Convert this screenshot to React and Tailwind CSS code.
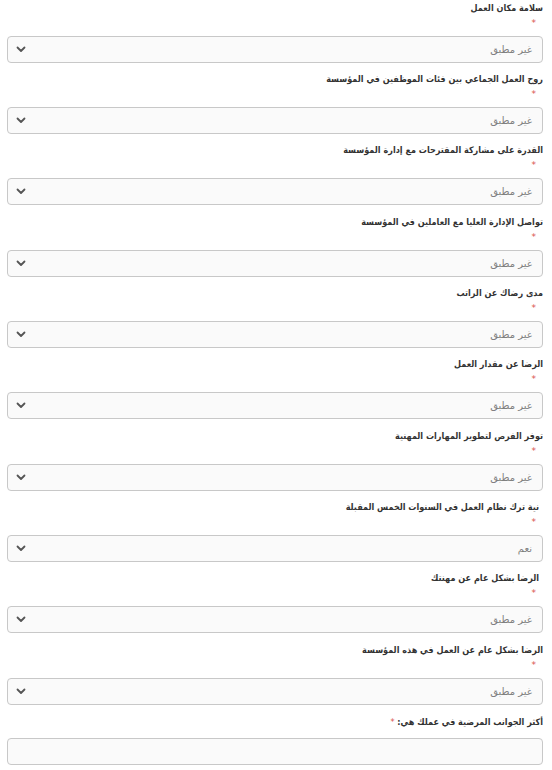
import React from "react";

const items = [
  { label: "سلامة مكان العمل", value: "غير مطبق" },
  { label: "روح العمل الجماعي بين فئات الموظفين في المؤسسة", value: "غير مطبق" },
  { label: "القدرة على مشاركة المقترحات مع إدارة المؤسسة", value: "غير مطبق" },
  { label: "تواصل الإدارة العليا مع العاملين في المؤسسة", value: "غير مطبق" },
  { label: "مدى رضاك عن الراتب", value: "غير مطبق" },
  { label: "الرضا عن مقدار العمل", value: "غير مطبق" },
  { label: "توفر الفرص لتطوير المهارات المهنية", value: "غير مطبق" },
  { label: "نية ترك نظام العمل في السنوات الخمس المقبلة", value: "نعم", indent: true },
  { label: "الرضا بشكل عام عن مهنتك", value: "غير مطبق", indent: true },
  { label: "الرضا بشكل عام عن العمل في هذه المؤسسة", value: "غير مطبق" },
];

function Chevron() {
  return (
    <svg width="10" height="7" viewBox="0 0 10 7" fill="none">
      <path d="M1.5 1.5 L5 5 L8.5 1.5" stroke="#555" strokeWidth="1.8" strokeLinecap="round" strokeLinejoin="round" />
    </svg>
  );
}

const labelFont = { fontFamily: '"DejaVu Sans Condensed", "DejaVu Sans", sans-serif' };

export default function App() {
  return (
    <div
      dir="rtl"
      className="w-[552px] h-[770px] bg-white pl-[7px] pr-[9px] overflow-hidden"
      style={{ fontFamily: '"DejaVu Sans", "Noto Sans", sans-serif' }}
    >
      {items.map((it, i) => (
        <div key={i} className={i % 3 === 2 ? "pb-[9px]" : "pb-[8px]"}>
          <div
            style={labelFont}
            className={`h-[16px] leading-[16px] text-[9px] font-bold text-[#333] whitespace-nowrap ${it.indent ? "pr-[4px]" : ""}`}
          >
            {it.label}
          </div>
          <div className="h-[14px] leading-[14px] pr-[7px] text-[9px] text-[#d9534f] mb-[6px]">*</div>
          <div className="h-[27px] rounded-[4px] border border-[#c8c8c8] bg-[#fafafa] flex items-center justify-between pr-[10px] pl-[8px]">
            <span className="text-[10px] text-[#808080]">{it.value}</span>
            <Chevron />
          </div>
        </div>
      ))}
      <div className="pt-[1px]">
        <div
          style={labelFont}
          className="h-[16px] leading-[16px] text-[9px] font-bold text-[#333] whitespace-nowrap mb-[8px]"
        >
          أكثر الجوانب المرضية في عملك هي: <span className="text-[#d9534f] font-normal text-[9px]">*</span>
        </div>
        <div className="h-[27px] rounded-[4px] border border-[#c8c8c8] bg-[#fafafa]" />
      </div>
    </div>
  );
}
